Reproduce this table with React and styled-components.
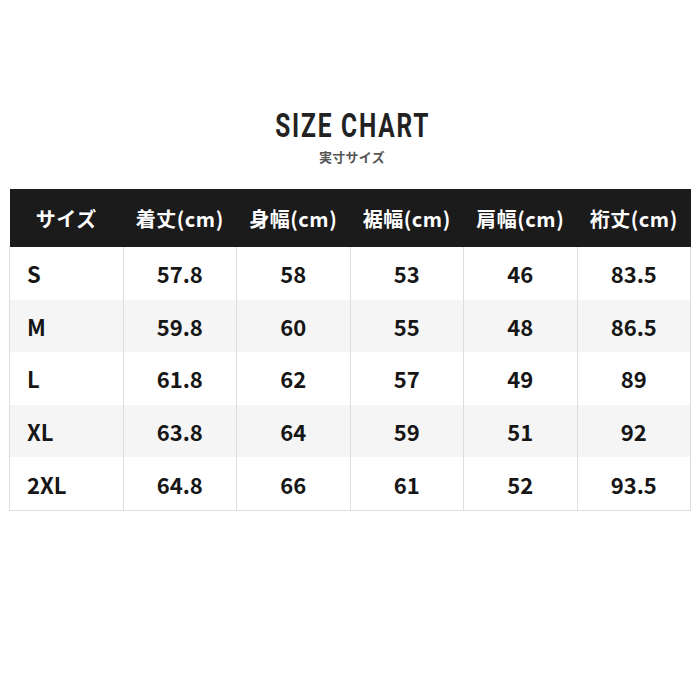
import React from "react";
import styled, { createGlobalStyle } from "styled-components";

const GlobalStyle = createGlobalStyle`
  body {
    margin: 0;
    background: #ffffff;
    font-family: "Noto Sans CJK JP", "Noto Sans", sans-serif;
  }
`;

const Page = styled.div`
  width: 700px;
  height: 700px;
  padding-top: 106px;
  box-sizing: border-box;
  display: flex;
  flex-direction: column;
  align-items: center;
`;

const Title = styled.h1`
  margin: 0 0 0 6px;
  display: inline-block;
  font-family: Roboto, "Liberation Sans", sans-serif;
  font-weight: 700;
  font-size: 34px;
  line-height: 38px;
  letter-spacing: 2.5px;
  color: #222222;
  transform: scaleX(0.72);
  white-space: nowrap;
`;

const Subtitle = styled.div`
  margin: 4px 0 0 4px;
  font-size: 13px;
  font-weight: 700;
  line-height: 18px;
  color: #555555;
  letter-spacing: 0.3px;
`;

const Table = styled.table`
  margin-top: 23px;
  width: 682px;
  border-collapse: collapse;
  table-layout: fixed;
`;

const HeadCell = styled.th`
  height: 58px;
  padding: 0;
  background: #1b1b1b;
  color: #ffffff;
  font-size: 20px;
  font-weight: 700;
  text-align: center;
  letter-spacing: 0.5px;
`;

const Row = styled.tr`
  background: ${(p) => (p.$shaded ? "#f5f5f5" : "#ffffff")};
  &:last-child td {
    border-bottom: 1px solid #dddddd;
  }
`;

const Cell = styled.td`
  height: 52.6px;
  padding: 0 ${(p) => (p.$label ? "17px" : "0")};
  border-left: 1px solid #dddddd;
  border-right: 1px solid #dddddd;
  color: #161616;
  font-size: 22px;
  font-weight: 700;
  text-align: ${(p) => (p.$label ? "left" : "center")};
`;

const headers = ["サイズ", "着丈(cm)", "身幅(cm)", "裾幅(cm)", "肩幅(cm)", "裄丈(cm)"];

const rows = [
  ["S", "57.8", "58", "53", "46", "83.5"],
  ["M", "59.8", "60", "55", "48", "86.5"],
  ["L", "61.8", "62", "57", "49", "89"],
  ["XL", "63.8", "64", "59", "51", "92"],
  ["2XL", "64.8", "66", "61", "52", "93.5"],
];

export default function App() {
  return (
    <Page>
      <GlobalStyle />
      <Title>SIZE CHART</Title>
      <Subtitle>実寸サイズ</Subtitle>
      <Table>
        <thead>
          <tr>
            {headers.map((h) => (
              <HeadCell key={h}>{h}</HeadCell>
            ))}
          </tr>
        </thead>
        <tbody>
          {rows.map((r, i) => (
            <Row key={r[0]} $shaded={i % 2 === 1}>
              {r.map((v, j) => (
                <Cell key={j} $label={j === 0}>
                  {v}
                </Cell>
              ))}
            </Row>
          ))}
        </tbody>
      </Table>
    </Page>
  );
}
